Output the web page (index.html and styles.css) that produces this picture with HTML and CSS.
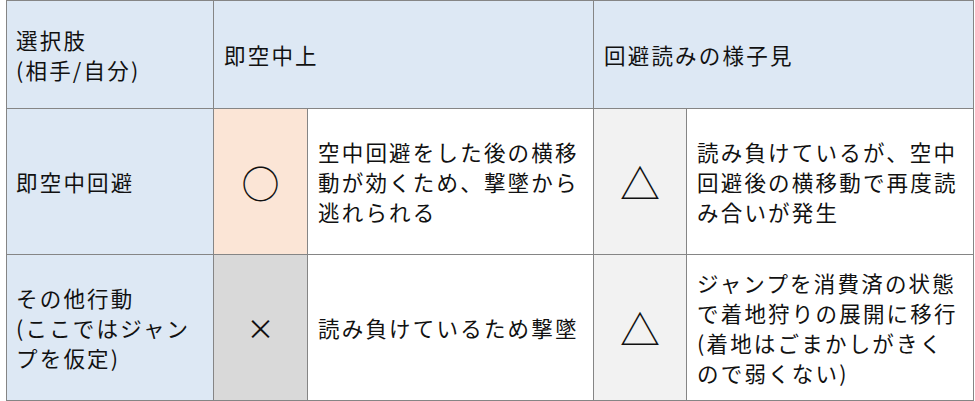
FILE: index.html
```html
<!DOCTYPE html>
<html lang="ja">
<head>
<meta charset="utf-8">
<link rel="stylesheet" href="styles.css">
</head>
<body>
<div class="grid">
  <div class="cell head">選択肢<br>(相手/自分)</div>
  <div class="cell head span2">即空中上</div>
  <div class="cell head span2">回避読みの様子見</div>

  <div class="cell label">即空中回避</div>
  <div class="cell mark good"><span class="sym circle">○</span></div>
  <div class="cell text">空中回避をした後の横移動が効くため、撃墜から逃れられる</div>
  <div class="cell mark even"><span class="sym tri">△</span></div>
  <div class="cell text">読み負けているが、空中回避後の横移動で再度読み合いが発生</div>

  <div class="cell label">その他行動<br>(ここではジャン<br>プを仮定)</div>
  <div class="cell mark bad"><span class="sym cross">×</span></div>
  <div class="cell text">読み負けているため撃墜</div>
  <div class="cell mark even"><span class="sym tri">△</span></div>
  <div class="cell text">ジャンプを消費済の状態で着地狩りの展開に移行(着地はごまかしがきくので弱くない)</div>
</div>
</body>
</html>
```

FILE: styles.css
```css
html, body {
  margin: 0;
  padding: 0;
  background: #ffffff;
}
body {
  font-family: "Noto Sans CJK JP", "Noto Sans", sans-serif;
  color: #111;
}
.grid {
  display: grid;
  grid-template-columns: 206px 93px 285px 92px 286px;
  grid-template-rows: 107px 145px 145px;
  gap: 1px;
  padding: 1px;
  background: #858585;
  width: max-content;
  margin-left: 6px;
}
.cell {
  background: #fff;
  display: flex;
  align-items: center;
  padding: 0 9px 0 10px;
  font-size: 21.5px;
  line-height: 30px;
  letter-spacing: 2.2px;
  box-sizing: border-box;
}
.span2 { grid-column: span 2; }
.head, .label { background: #dde8f4; }
.label, .grid > .head:first-child { padding-left: 9px; }
.mark { justify-content: center; padding: 0; letter-spacing: 0; }
.good { background: #fbe5d6; }
.bad { background: #d9d9d9; }
.even { background: #f2f2f2; }
.sym { display: block; line-height: 1; font-family: "Noto Sans CJK JP", sans-serif; }
.circle { font-size: 38px; }
.tri { font-size: 40px; }
.cross { font-size: 28px; }
```
